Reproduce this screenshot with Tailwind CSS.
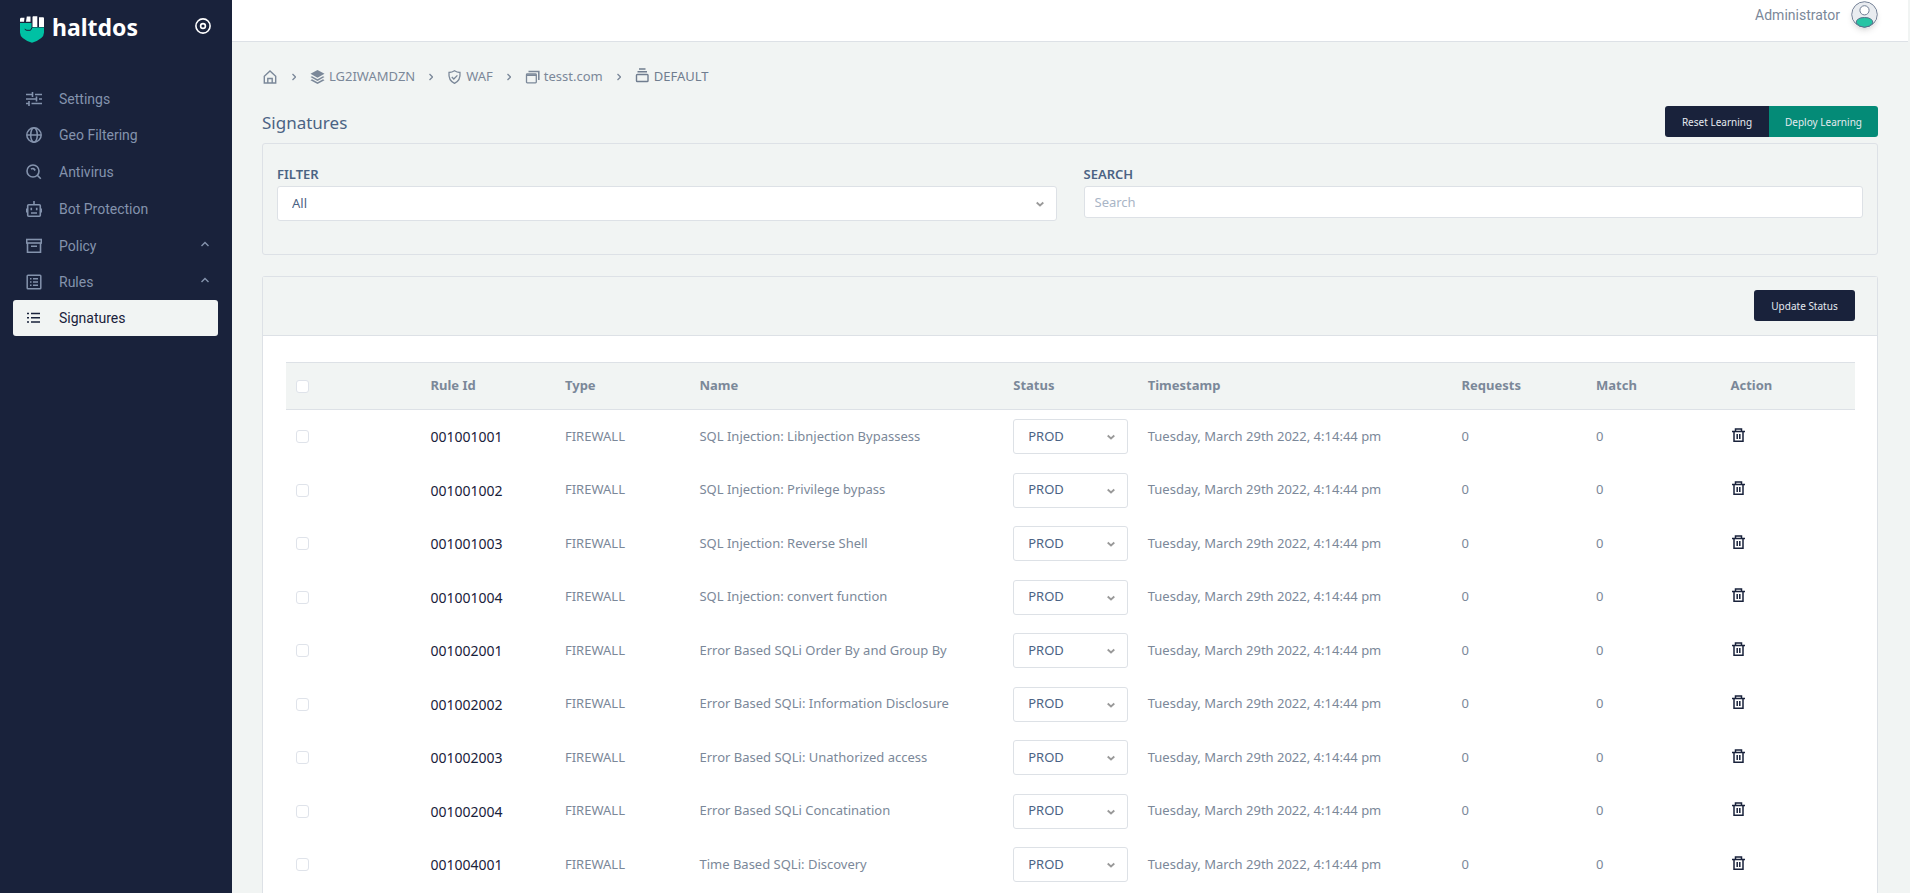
<!DOCTYPE html>
<html lang="en">
<head>
  <meta charset="UTF-8">
  <meta name="viewport" content="width=device-width, initial-scale=1.0">
  <title>Signatures</title>
  <script src="https://cdn.jsdelivr.net/npm/@tailwindcss/browser@4"></script>
</head>
<body class="bg-[#f1f4f3] font-['Noto_Sans',sans-serif] text-[13px] text-[#7b8899]">
<div class="flex min-h-screen">

  <!-- Sidebar -->
  <aside class="w-[232px] shrink-0 bg-[#19223b] text-[14px] font-['Roboto',sans-serif] text-[#8493ad]">
    <div class="flex items-center justify-between pl-5 pr-[21px] pt-[9px]">
      <a href="#" class="flex items-center gap-2 font-['Noto_Sans',sans-serif] text-[23px] leading-9 font-bold text-white">
        <svg class="w-6 h-7 mt-1" viewBox="0 0 24 28">
          <path fill="#00c1a4" d="M0 8h12v4.500H24V17.500q0 6.500-12 10.200Q0 24 0 17.500z"/>
          <path fill="none" stroke="#19223b" d="M5 13.800q0 1.500 2 1.500h3.500l1.500-2.800V8"/>
          <path fill="#fff" d="M.8 2.800H4.500L4 6.800H0V3.800zM6.800 1.500H10.500V6.800H6zM13 1.300h4.300v10.700H12.500V2zM19 2.200h4q1 0 1 1V12H19z"/>
        </svg>
        haltdos
      </a>
      <button type="button" aria-label="Toggle sidebar" class="pb-0.5 text-white">
        <svg class="w-4 h-4" viewBox="0 0 16 16" fill="none" stroke="currentColor" stroke-width="1.600"><circle cx="8" cy="8" r="7.100"/><circle cx="8" cy="8" r="2.400"/></svg>
      </button>
    </div>

    <nav class="mt-9 pl-[13px] pr-[14px]">
      <a href="#" class="flex h-9 items-center gap-[17px] px-[13px]">
        <svg class="w-4 h-4" viewBox="0 0 16 16" fill="none" stroke="currentColor" stroke-width="1.600"><path d="M0 3.500h6.500M6.500 1v5M9 3.500h7M0 8h10.500M10.500 5.500v5M13 8h3M0 12.500h3M3 10v5M5.500 12.500H16"/></svg>
        Settings
      </a>
      <a href="#" class="flex h-9 items-center gap-[17px] px-[13px]">
        <svg class="w-4 h-4" viewBox="0 0 16 16" fill="none" stroke="currentColor" stroke-width="1.500"><circle cx="8" cy="8" r="7.200"/><ellipse cx="8" cy="8" rx="3.300" ry="7.200"/><path d="M1 8h14"/></svg>
        Geo Filtering
      </a>
      <a href="#" class="mt-px flex h-9 items-center gap-[17px] px-[13px]">
        <svg class="w-4 h-4" viewBox="0 0 16 16" fill="none" stroke="currentColor" stroke-width="1.600"><circle cx="7" cy="7" r="6"/><path d="M11.300 11.300l3.500 3.500M5 5.200q2.500-1.800 4.200 1.300"/></svg>
        Antivirus
      </a>
      <a href="#" class="mt-px flex h-9 items-center gap-[17px] px-[13px]">
        <svg class="w-4 h-4" viewBox="0 0 16 16" fill="none" stroke="currentColor" stroke-width="1.600"><rect x="1.700" y="3.700" width="12.600" height="11.500" rx="1"/><path d="M8 0v3.700M.6 7.500v4M15.400 7.500v4M5.300 6.800v2.500M10.700 6.800v2.500M5 12h6"/></svg>
        Bot Protection
      </a>
      <a href="#" class="mt-px flex h-9 items-center gap-[17px] px-[13px]">
        <svg class="w-4 h-4" viewBox="0 0 16 16" fill="none" stroke="currentColor" stroke-width="1.600"><rect x=".7" y="1.500" width="14.600" height="3.500"/><path d="M1.500 5v9.300h13V5M5 8.200h6"/></svg>
        Policy
        <svg class="-mr-1 ml-auto mb-1 w-2 h-2" viewBox="0 0 8 8" fill="none" stroke="currentColor" stroke-width="1.400"><path d="M.5 6L4 2.500 7.500 6"/></svg>
      </a>
      <a href="#" class="flex h-9 items-center gap-[17px] px-[13px]">
        <svg class="w-4 h-4" viewBox="0 0 16 16" fill="none" stroke="currentColor" stroke-width="1.500"><rect x="1.200" y="1.200" width="13.600" height="13.600" rx=".8"/><path d="M4 4.800h1.500M7 4.800h5M4 8h1.500M7 8h5M4 11.200h1.500M7 11.200h5"/></svg>
        Rules
        <svg class="-mr-1 ml-auto mb-1 w-2 h-2" viewBox="0 0 8 8" fill="none" stroke="currentColor" stroke-width="1.400"><path d="M.5 6L4 2.500 7.500 6"/></svg>
      </a>
      <a href="#" aria-current="page" class="flex h-9 items-center gap-[17px] rounded-[3px] bg-[#f1f4f3] px-[13px] text-[#19223b]">
        <svg class="w-4 h-4" viewBox="0 0 16 16" fill="none" stroke="currentColor" stroke-width="1.500"><path d="M1 3.500h2M5 3.500h9M1 7.700h2M5 7.700h9M1 12h2M5 12h9"/></svg>
        Signatures
      </a>
    </nav>
  </aside>

  <div class="flex min-w-0 flex-1 flex-col">
    <!-- Top bar -->
    <header class="mr-0.5 flex h-[42px] items-start justify-end gap-[11px] border-b border-[#dde1e6] bg-white pr-[30px] pt-px font-['Roboto',sans-serif] text-[14px] leading-7">
      <span>Administrator</span>
      <svg class="w-[27px] h-[27px] rounded-full shadow-md" viewBox="0 0 27 27">
        <circle cx="13.500" cy="13.500" r="12.800" fill="#e9ecf0" stroke="#6f7c92"/>
        <path d="M5 22Q5.500 16.500 13.500 16.500T22 22Q18.500 26.200 13.500 26.200T5 22z" fill="#27c4a4" stroke="#56708a"/>
        <circle cx="13.500" cy="9.300" r="4.600" fill="#fff" stroke="#6f7c92"/>
      </svg>
    </header>

    <main class="flex flex-1 flex-col pl-[30px] pr-8 pt-[25px]">
      <!-- Breadcrumb -->
      <nav aria-label="Breadcrumb" class="flex h-5 items-center gap-[14px] text-[13px]">
        <a href="#" aria-label="Home">
          <svg class="w-4 h-4" viewBox="0 0 16 16" fill="none" stroke="currentColor" stroke-width="1.400"><path d="M2.300 14V7.300L8 2l5.700 5.300V14zM5.800 14V9.500h4.400V14"/></svg>
        </a>
        <svg class="w-1 h-2" viewBox="0 0 4 8" fill="none" stroke="currentColor" stroke-width="1.300"><path d="M.5 1l3 3-3 3"/></svg>
        <a href="#" class="flex items-center gap-1">
          <svg class="w-[15px] h-4" viewBox="0 0 15 16" fill="currentColor"><path d="M7.500 1l7 3.800-7 3.900-7-3.900zM2 7.200l5.500 3 5.500-3 1.500.8-7 3.900L.5 8zM2 10.300l5.500 3 5.500-3 1.500.9-7 3.800-7-3.800z"/></svg>
          LG2IWAMDZN
        </a>
        <svg class="w-1 h-2" viewBox="0 0 4 8" fill="none" stroke="currentColor" stroke-width="1.300"><path d="M.5 1l3 3-3 3"/></svg>
        <a href="#" class="flex items-center gap-1">
          <svg class="w-[15px] h-4" viewBox="0 0 15 16" fill="none" stroke="currentColor" stroke-width="1.300"><path d="M7.500 1.800q2.500 1.700 5.500 1.700Q13.800 11.500 7.500 14.300 1.200 11.500 2 3.500q3 0 5.500-1.700zM4.800 8l2 2 3.600-3.600"/></svg>
          WAF
        </a>
        <svg class="w-1 h-2" viewBox="0 0 4 8" fill="none" stroke="currentColor" stroke-width="1.300"><path d="M.5 1l3 3-3 3"/></svg>
        <a href="#" class="flex items-center gap-1">
          <svg class="w-[15px] h-4" viewBox="0 0 15 16" fill="none" stroke="currentColor" stroke-width="1.300"><rect x="1.500" y="5" width="9.800" height="8.800" rx=".8"/><path d="M1.500 6.300h9.800M3.500 2.500h10.300v8.500" stroke-width="1.600"/></svg>
          tesst.com
        </a>
        <svg class="w-1 h-2" viewBox="0 0 4 8" fill="none" stroke="currentColor" stroke-width="1.300"><path d="M.5 1l3 3-3 3"/></svg>
        <span class="flex items-center gap-1 text-[#707d8f]">
          <svg class="mb-1 w-[15px] h-4" viewBox="0 0 15 16" fill="none" stroke="currentColor" stroke-width="1.400"><rect x="1.500" y="7.500" width="11.500" height="7" rx=".8"/><path d="M4 2h6.500M2.500 4.700h9.500"/></svg>
          DEFAULT
        </span>
      </nav>

      <div class="mt-[19px] flex items-center justify-between">
        <h1 class="pt-[3px] text-[17px] leading-6 text-[#4b6384]">Signatures</h1>
        <div class="flex text-[10px] text-[#e6eaf0]">
          <button type="button" class="h-[31px] w-[104px] rounded-l-[3px] bg-[#19223b] pt-px">Reset Learning</button>
          <button type="button" class="h-[31px] w-[109px] rounded-r-[3px] bg-[#048b77] pt-px">Deploy Learning</button>
        </div>
      </div>

      <!-- Filters -->
      <section class="mt-[6px] grid grid-cols-2 gap-[27px] rounded-[3px] border border-[#dde1e6] px-[14px] pt-[19px] pb-[33px] text-[#4b6384]">
        <div>
          <label for="filter" class="mb-px block leading-[22px] font-semibold">FILTER</label>
          <div class="relative">
            <select id="filter" class="h-[35px] w-full appearance-none rounded-[3px] border border-[#dde1e6] bg-white px-[14px]">
              <option>All</option>
            </select>
            <svg class="pointer-events-none absolute right-[13px] top-[14px] w-2 h-2" viewBox="0 0 8 8" fill="none" stroke="#999" stroke-width="1.800"><path d="M.7 2.500L4 5.500l3.300-3"/></svg>
          </div>
        </div>
        <div>
          <label for="search" class="mb-px block leading-[22px] font-semibold">SEARCH</label>
          <input id="search" type="text" placeholder="Search" class="h-8 w-full rounded-[3px] border border-[#dde1e6] bg-white px-[10px] placeholder:text-[#a9b5c6]">
        </div>
      </section>

      <!-- Signature list -->
      <section class="mt-[21px] flex-1 rounded-t-[3px] border border-b-0 border-[#dde1e6] bg-white">
        <div class="flex justify-end border-b border-[#dde1e6] bg-[#f1f4f3] px-[22px] pt-[13px] pb-[14px]">
          <button type="button" class="h-[31px] w-[101px] rounded-[3px] bg-[#19223b] pt-px text-[10px] text-[#e6eaf0]">Update Status</button>
        </div>
        <div class="pl-[23px] pr-[22px] pt-[26px]">
          <table class="w-full table-fixed text-left">
            <colgroup>
              <col><col><col><col class="w-[20%]"><col><col class="w-[20%]"><col><col><col>
            </colgroup>
            <thead class="border-y border-[#dde1e6] bg-[#f1f4f3]">
              <tr class="h-[47px]">
                <th class="px-[10px]"><input type="checkbox" aria-label="Select all" class="block h-[13px] w-[13px] appearance-none rounded-[3px] border border-[#dfe3ea] bg-white"></th>
                <th class="px-[10px]">Rule Id</th>
                <th class="px-[10px]">Type</th>
                <th class="px-[10px]">Name</th>
                <th class="px-[10px]">Status</th>
                <th class="px-[10px]">Timestamp</th>
                <th class="px-[10px]">Requests</th>
                <th class="px-[10px]">Match</th>
                <th class="px-[10px]">Action</th>
              </tr>
            </thead>
            <tbody id="rules"></tbody>
          </table>
        </div>
      </section>
    </main>
  </div>
</div>

<script>
  const rules = [
    ['001001001', 'SQL Injection: Libnjection Bypassess'],
    ['001001002', 'SQL Injection: Privilege bypass'],
    ['001001003', 'SQL Injection: Reverse Shell'],
    ['001001004', 'SQL Injection: convert function'],
    ['001002001', 'Error Based SQLi Order By and Group By'],
    ['001002002', 'Error Based SQLi: Information Disclosure'],
    ['001002003', 'Error Based SQLi: Unathorized access'],
    ['001002004', 'Error Based SQLi Concatination'],
    ['001004001', 'Time Based SQLi: Discovery'],
  ];

  document.getElementById('rules').innerHTML = rules.map(([id, name]) => `
    <tr class="h-[54px] even:h-[53px]">
      <td class="px-[10px]"><input type="checkbox" aria-label="Select ${id}" class="block h-[13px] w-[13px] appearance-none rounded-[3px] border border-[#dfe3ea] bg-white"></td>
      <td class="px-[10px] text-[14px] text-[#19223b]">${id}</td>
      <td class="px-[10px]">FIREWALL</td>
      <td class="px-[10px] whitespace-nowrap">${name}</td>
      <td class="px-[10px]">
        <div class="relative">
          <select aria-label="Status of ${id}" class="block h-[35px] w-full appearance-none rounded-[3px] border border-[#dde1e6] bg-white px-[14px] text-[#4b6384]">
            <option>PROD</option>
          </select>
          <svg class="pointer-events-none absolute right-[13px] top-[14px] w-2 h-2" viewBox="0 0 8 8" fill="none" stroke="#999" stroke-width="1.800"><path d="M.7 2.500L4 5.500l3.300-3"/></svg>
        </div>
      </td>
      <td class="px-[10px] whitespace-nowrap">Tuesday, March 29th 2022, 4:14:44 pm</td>
      <td class="px-[10px]">0</td>
      <td class="px-[10px]">0</td>
      <td class="px-[10px]">
        <button type="button" aria-label="Delete ${id}" class="block pb-1 text-[#19223b]">
          <svg class="w-[15px] h-4" viewBox="0 0 15 16" fill="none" stroke="currentColor" stroke-width="1.500"><path d="M1 4.600h13M4.500 4.600V2.100h6v2.500M3 4.600v9.700h9V4.600M6.200 7v5M8.800 7v5"/></svg>
        </button>
      </td>
    </tr>`).join('');
</script>
</body>
</html>
